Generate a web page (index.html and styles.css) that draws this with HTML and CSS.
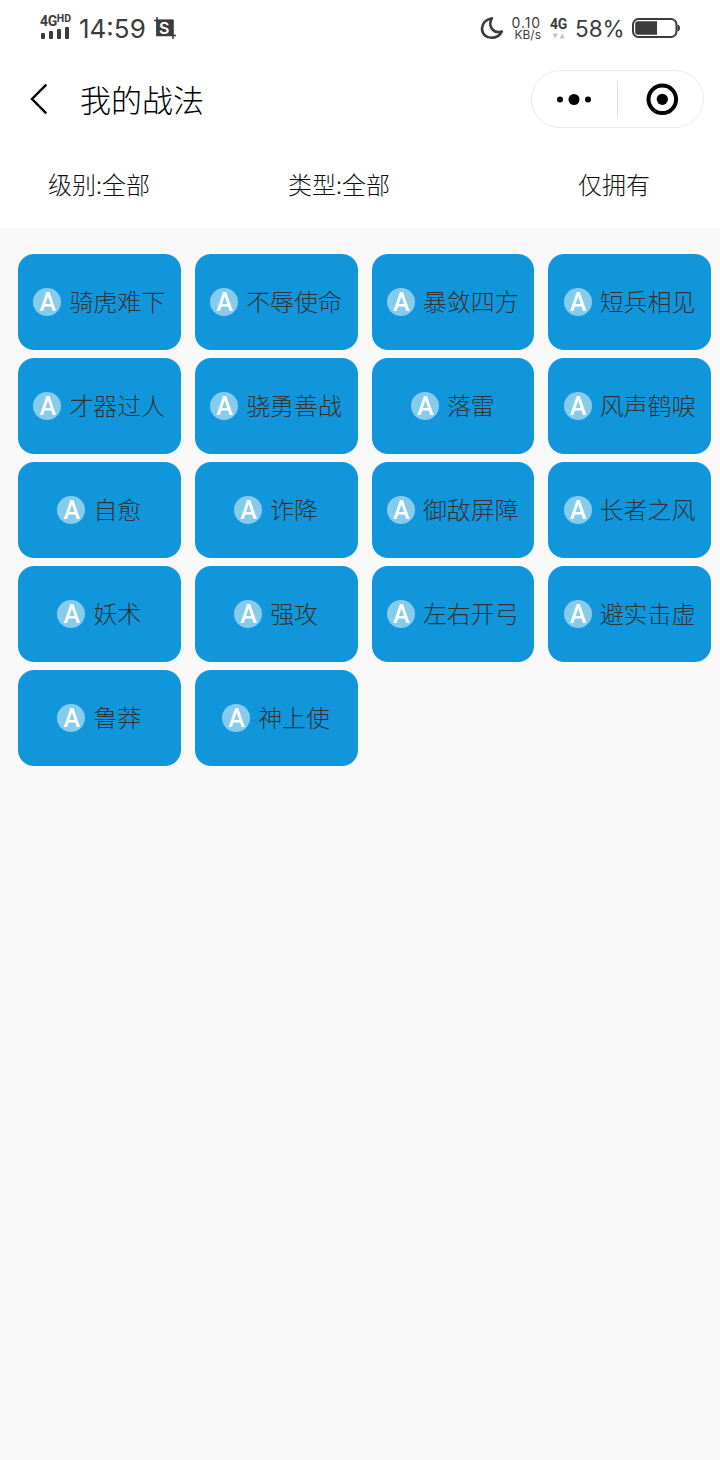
FILE: index.html
```html
<!DOCTYPE html>
<html lang="zh-CN">
  <head>
    <meta charset="UTF-8" />
    <meta name="viewport" content="width=device-width, initial-scale=1.0" />
    <title>我的战法</title>
    <link rel="stylesheet" href="styles.css">
  </head>
  <body>
    <header class="statusbar">
      <div class="signal">
        <div class="network">4G<span>HD</span></div>
        <div class="bars"><i></i><i></i><i></i><i></i></div>
      </div>
      <span class="time">14:59</span>
      <div class="shot">
        <svg width="22" height="22" viewBox="0 0 22 22">
          <path d="M0 3.5H19V22M3 0V18.5H22" fill="none" stroke="#3c3c3c" stroke-width="1.6" />
          <rect x="2.5" y="2.5" width="16.5" height="16.5" fill="#3c3c3c" />
        </svg>
        <span>S</span>
      </div>
      <svg class="moon" width="24" height="24" viewBox="0 0 24 24">
        <path d="M12 2.2C5.8 3.2 2 7.4 2 12.4C2 18 6.2 21.8 11.6 21.8C16.2 21.8 20 19.4 21.8 15.4C18 16.6 14 15.6 11.8 12.4C9.6 9.2 9.8 5.4 12 2.2Z" fill="none" stroke="#3c3c3c" stroke-width="2.6" stroke-linejoin="round" />
      </svg>
      <div class="speed">
        <span class="num">0.10</span>
        <span class="unit">KB/s</span>
      </div>
      <div class="data">
        <span>4G</span>
        <svg width="14" height="6" viewBox="0 0 14 6">
          <path d="M0.5 0.5H6L3.2 5.5ZM7.5 5.5H13L10.2 0.5Z" fill="#c4c4c4" />
        </svg>
      </div>
      <span class="percent">58%</span>
      <svg class="battery" width="48" height="20" viewBox="0 0 48 20">
        <rect x="1" y="1" width="43.5" height="18" rx="5.5" fill="none" stroke="#3c3c3c" stroke-width="2" />
        <path d="M6 3.2H25V16.8H6Q3.2 16.8 3.2 14V6Q3.2 3.2 6 3.2Z" fill="#3c3c3c" />
        <path d="M45.5 6.5Q48 7 48 10Q48 13 45.5 13.5Z" fill="#3c3c3c" />
      </svg>
    </header>

    <nav class="navbar">
      <svg class="back" width="18" height="32" viewBox="0 0 18 32">
        <path d="M16.3 1.7L2 16L16.3 30.3" fill="none" stroke="#000" stroke-width="2.4" />
      </svg>
      <h1>我的战法</h1>
      <div class="capsule">
        <svg width="171" height="56" viewBox="0 0 171 56">
          <circle cx="28" cy="28.5" r="3" />
          <circle cx="42" cy="28.5" r="5.5" />
          <circle cx="56" cy="28.5" r="3" />
          <path d="M85.5 10V45" stroke="#dcdcdc" />
          <circle cx="130.3" cy="28.3" r="13.8" fill="none" stroke="#000" stroke-width="4" />
          <circle cx="130.3" cy="28.3" r="5.6" />
        </svg>
      </div>
    </nav>

    <div class="filters">
      <span>级别:全部</span>
      <span>类型:全部</span>
      <span class="owned">仅拥有</span>
    </div>

    <main class="skills">
      <div class="skill"><b>A</b><span>骑虎难下</span></div>
      <div class="skill"><b>A</b><span>不辱使命</span></div>
      <div class="skill"><b>A</b><span>暴敛四方</span></div>
      <div class="skill"><b>A</b><span>短兵相见</span></div>
      <div class="skill"><b>A</b><span>才器过人</span></div>
      <div class="skill"><b>A</b><span>骁勇善战</span></div>
      <div class="skill"><b>A</b><span>落雷</span></div>
      <div class="skill"><b>A</b><span>风声鹤唳</span></div>
      <div class="skill"><b>A</b><span>自愈</span></div>
      <div class="skill"><b>A</b><span>诈降</span></div>
      <div class="skill"><b>A</b><span>御敌屏障</span></div>
      <div class="skill"><b>A</b><span>长者之风</span></div>
      <div class="skill"><b>A</b><span>妖术</span></div>
      <div class="skill"><b>A</b><span>强攻</span></div>
      <div class="skill"><b>A</b><span>左右开弓</span></div>
      <div class="skill"><b>A</b><span>避实击虚</span></div>
      <div class="skill"><b>A</b><span>鲁莽</span></div>
      <div class="skill"><b>A</b><span>神上使</span></div>
    </main>
  </body>
</html>
```
FILE: styles.css
```css
* {
  box-sizing: border-box;
  margin: 0;
  padding: 0;
}
body {
  min-height: 100vh;
  background-color: #f8f8f8;
  font-family: "Noto Sans CJK SC", sans-serif;
  font-weight: 300;
}
svg {
  display: block;
  flex-shrink: 0;
}

/* status bar */
.statusbar {
  display: flex;
  align-items: center;
  height: 56px;
  padding: 0 40px;
  background-color: #fff;
  color: #3c3c3c;
  font-family: Inter, sans-serif;
  font-weight: 400;
}
.signal {
  width: 31px;
  height: 26px;
}
.network {
  display: flex;
  height: 13px;
  margin-top: -1px;
  font-family: Roboto, sans-serif;
  font-size: 14px;
  font-weight: 700;
  line-height: 14px;
  letter-spacing: -0.4px;
}
.network span {
  font-size: 10.5px;
  line-height: 10px;
  letter-spacing: 0;
}
.bars {
  display: flex;
  align-items: flex-end;
  gap: 4px;
  height: 12px;
  padding-left: 1px;
}
.bars i {
  width: 4px;
  height: 6px;
  border-radius: 1px;
  background-color: #3c3c3c;
}
.bars i:nth-child(2) {
  height: 8px;
}
.bars i:nth-child(3) {
  height: 10px;
}
.bars i:nth-child(4) {
  height: 12px;
}
.time {
  width: 68px;
  margin-left: 8px;
  font-size: 26px;
  line-height: 56px;
  padding-top: 2px;
  white-space: nowrap;
}
.shot {
  position: relative;
  margin-left: 7px;
}
.shot span {
  position: absolute;
  left: 5px;
  top: 2px;
  color: #fff;
  font-size: 16px;
  font-weight: 600;
  line-height: 18px;
}
.moon {
  margin-left: auto;
}
.speed {
  display: flex;
  flex-direction: column;
  align-items: flex-end;
  width: 32px;
  margin-left: 5px;
}
.speed .num {
  font-size: 14px;
  line-height: 13px;
  letter-spacing: 0.9px;
}
.speed .unit {
  font-size: 12px;
  line-height: 12px;
}
.data {
  display: flex;
  flex-direction: column;
  align-items: center;
  gap: 3px;
  width: 17px;
  margin: 0 8px 0 9px;
  font-family: Roboto, sans-serif;
  font-size: 14px;
  font-weight: 700;
  line-height: 12px;
  letter-spacing: -0.2px;
}
.percent {
  width: 48px;
  padding-top: 1px;
  font-size: 22.5px;
  white-space: nowrap;
}
.battery {
  margin-left: 9px;
}

/* title bar */
.navbar {
  display: flex;
  align-items: center;
  height: 86px;
  padding: 0 16px 0 30px;
  background-color: #fff;
}
.navbar h1 {
  margin-left: 32px;
  font-size: 31px;
  font-weight: 300;
  line-height: 44px;
  color: #000;
}
.capsule {
  width: 173px;
  height: 58px;
  margin-left: auto;
  border: 1px solid #e8e8e8;
  border-radius: 29px;
}

/* filters */
.filters {
  display: flex;
  height: 86px;
  padding-left: 48px;
  background-color: #fff;
  color: #111;
  font-size: 24px;
  line-height: 84px;
}
.filters span {
  width: 240px;
}
.filters .owned {
  margin-left: 50px;
  width: auto;
}

/* skill cards */
.skills {
  display: grid;
  grid-template-columns: repeat(4, 1fr);
  grid-auto-rows: 96px;
  gap: 8px 14px;
  padding: 26px 9px 0 18px;
}
.skill {
  display: flex;
  justify-content: center;
  align-items: center;
  gap: 8px;
  border-radius: 16px;
  background-color: #1296db;
  color: #333;
  font-size: 24px;
  line-height: 34px;
  white-space: nowrap;
}
.skill span {
  padding-bottom: 2px;
}
.skill b {
  width: 28px;
  height: 28px;
  padding-left: 1px;
  border-radius: 50%;
  background-color: #84cbec;
  color: #fff;
  font-family: Roboto, sans-serif;
  font-size: 25px;
  font-weight: 500;
  line-height: 29px;
  text-align: center;
}
```
